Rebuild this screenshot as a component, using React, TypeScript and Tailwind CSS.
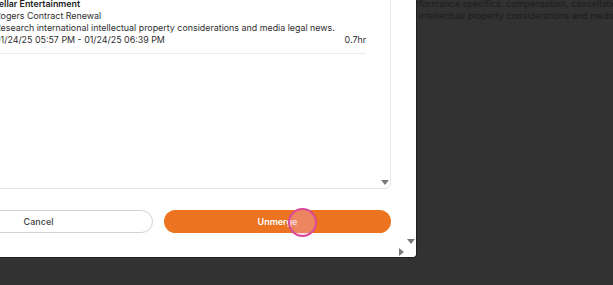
import React from "react";

export default function App() {
  return (
    <div
      className="relative w-[613px] h-[285px] overflow-hidden bg-[#323232]"
      style={{ fontFamily: "Inter, 'Liberation Sans', sans-serif" }}
    >
      {/* background page content behind modal */}
      <div className="text-[9px] leading-[12px] text-[#1c1c1c] whitespace-nowrap">
        <div className="pl-[405px] -mt-[2px]">performance specifics, compensation, cancellation terms</div>
        <div className="pl-[419px]">intellectual property considerations and media legal news.</div>
      </div>

      {/* modal dialog */}
      <div className="absolute left-[-101px] top-[-140px] w-[518px] h-[398px] bg-white rounded-br-[4px] border-r border-b border-[#1f1f1f] flex flex-col pl-[25px] pr-[25px] pb-[24px]">
        <div className="flex-1 border border-[#e6e6e6] rounded-b-[6px] relative flex flex-col justify-end">
          <div className="flex-1" />
          <div className="pl-[70px] pr-[24px] pb-[134px] text-[8.9px] leading-[12px] text-[#2e2e2e] whitespace-nowrap">
            <div className="ml-[-5px] font-semibold text-[#1e1e1e]">Stellar Entertainment</div>
            <div>Rogers Contract Renewal</div>
            <div>Research international intellectual property considerations and media legal news.</div>
            <div className="flex justify-between">
              <span>01/24/25 05:57 PM - 01/24/25 06:39 PM</span>
              <span>0.7hr</span>
            </div>
            <div className="mt-[7px] border-b border-[#ececec]" />
          </div>
          <svg className="absolute right-[1px] bottom-[2px]" width="8" height="6" viewBox="0 0 8 6">
            <path d="M0 0 L8 0 L4 5 Z" fill="#7a7a7a" />
          </svg>
        </div>
        <div className="mt-[21px] flex gap-[11px] h-[23px]">
          <button className="flex-1 rounded-full border border-[#d2d2d2] bg-white text-[9px] text-[#444] font-medium">
            Cancel
          </button>
          <button className="flex-1 rounded-full bg-[#ec731f] text-[9px] text-white font-semibold">
            Unmerge
          </button>
        </div>
        <svg className="absolute right-[1px] bottom-[12px]" width="8" height="6" viewBox="0 0 8 6">
          <path d="M0 0 L8 0 L4 5 Z" fill="#7a7a7a" />
        </svg>
        <svg className="absolute right-[11px] bottom-[1px]" width="6" height="8" viewBox="0 0 6 8">
          <path d="M0 0 L0 8 L5 4 Z" fill="#7a7a7a" />
        </svg>
      </div>

      {/* pointer highlight */}
      <div className="absolute left-[288px] top-[208px] w-[29px] h-[29px] rounded-full border-2 border-[#d94a9a] bg-[#eea0c2]/40" />
    </div>
  );
}
